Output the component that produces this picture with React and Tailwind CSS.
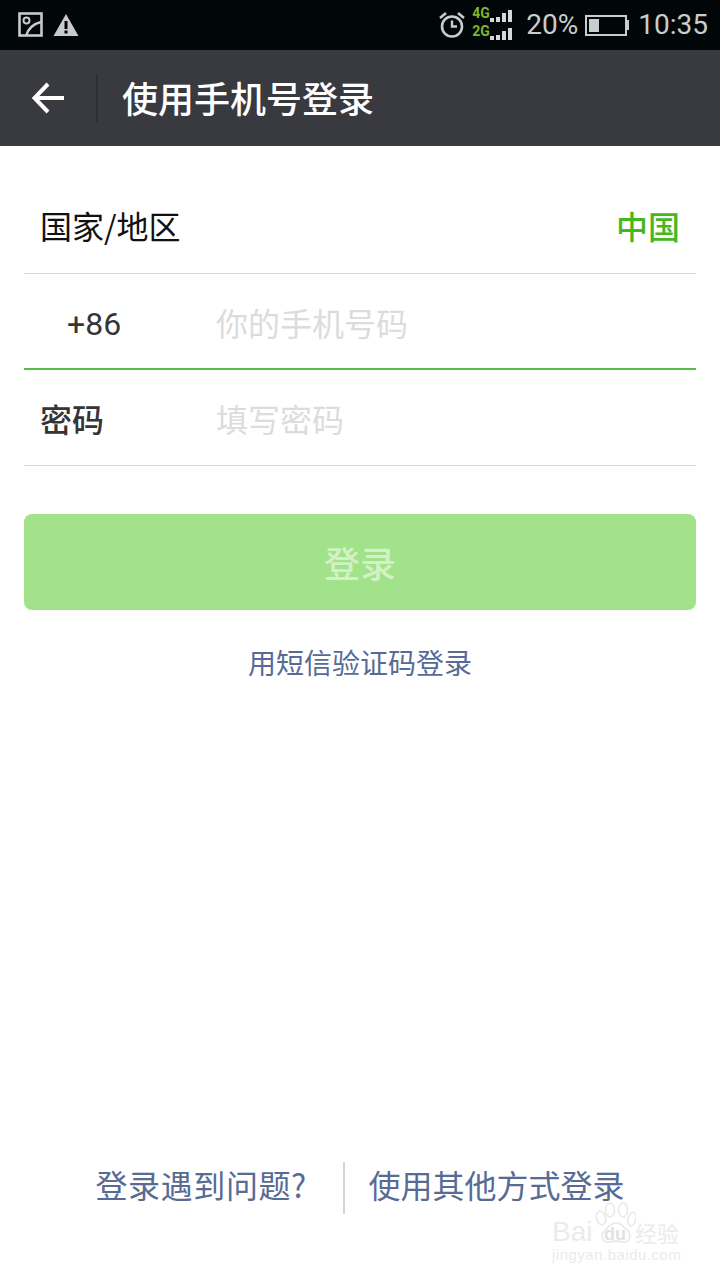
import React from 'react';

const cjk = 'font-["Noto_Sans_CJK_SC","Noto_Sans",sans-serif]';

const ImageOffIcon = () => (
  <svg width="26" height="26" viewBox="0 0 26 26" fill="none" stroke="#c9cac9">
    <rect x="1.5" y="1.5" width="22" height="22" strokeWidth="2.6" />
    <circle cx="8.5" cy="8.5" r="3" strokeWidth="2" />
    <path d="M23 10 C15 12 10 17 8 24" strokeWidth="2.6" />
  </svg>
);

const WarningIcon = () => (
  <svg width="26" height="24" viewBox="0 0 26 24">
    <path d="M13 1 L25.5 23 H0.5 Z" fill="#c9cac9" />
    <rect x="11.5" y="8" width="3" height="8" fill="#000" />
    <rect x="11.5" y="17.5" width="3" height="3" fill="#000" />
  </svg>
);

const AlarmIcon = () => (
  <svg width="26" height="28" viewBox="0 0 26 28" fill="none" stroke="#c9cdcb">
    <circle cx="13" cy="15.5" r="10" strokeWidth="2.6" />
    <path d="M13 9.5 V15.5 H18" strokeWidth="2.4" />
    <path d="M1 7 L7 2 M25 7 L19 2" strokeWidth="2.6" />
  </svg>
);

const SignalBars = () => (
  <div className="flex items-end gap-[2px] h-[12px]">
    <div className="w-[4px] h-[4px] bg-[#d5d8d6]" />
    <div className="w-[4px] h-[5px] bg-[#d5d8d6]" />
    <div className="w-[4px] h-[9px] bg-[#d5d8d6]" />
    <div className="w-[4px] h-[12px] bg-[#d5d8d6]" />
  </div>
);

const Signal = () => (
  <div className="flex flex-col gap-[6px] w-[40px]">
    {['4G', '2G'].map(label => (
      <div key={label} className="flex items-end">
        <span className='w-[18px] text-[14px] leading-[12px] font-bold text-[#7fb52f] font-["Roboto",sans-serif] -translate-y-[3px]'>{label}</span>
        <SignalBars />
      </div>
    ))}
  </div>
);

const Battery = () => (
  <div className="flex items-center">
    <div className="w-[42px] h-[21px] border-2 border-[#c9cdcb] p-[2px]">
      <div className="w-[10px] h-full bg-[#c9cdcb]" />
    </div>
    <div className="w-[2px] h-[10px] bg-[#c9cdcb]" />
  </div>
);

const App = () => {
  return (
    <div className={`relative w-[720px] h-[1280px] bg-white overflow-hidden flex flex-col ${cjk}`}>
      {/* status bar */}
      <div className="h-[50px] shrink-0 bg-[#010709] flex items-center pl-[18px] pr-[12px]">
        <ImageOffIcon />
        <div className="ml-[9px]"><WarningIcon /></div>
        <div className="ml-auto"><AlarmIcon /></div>
        <div className="ml-[7px]"><Signal /></div>
        <span className='ml-[14px] text-[28px] leading-[50px] text-[#c9cdcb] font-["Roboto",sans-serif]'>20%</span>
        <div className="ml-[7px]"><Battery /></div>
        <span className='ml-[9px] text-[28px] leading-[50px] text-[#c9cdcb] font-["Roboto",sans-serif]'>10:35</span>
      </div>

      {/* title bar */}
      <div className="h-[96px] shrink-0 bg-[#393a3f] flex items-center">
        <svg className="ml-[32px]" width="34" height="32" viewBox="0 0 34 32" fill="none" stroke="#fff" strokeWidth="4">
          <path d="M32 16 H3 M16 2 L2.5 16 L16 30" />
        </svg>
        <div className="ml-[30px] w-[2px] h-[48px] bg-[#2e2f33]" />
        <span className="ml-[24px] text-[36px] text-white font-medium -translate-y-[1px]">使用手机号登录</span>
      </div>

      {/* form */}
      <div className="mx-6 h-[128px] flex items-center justify-between border-b border-[#d9d9d9] px-4 pt-[31px] shrink-0">
        <span className="text-[32px] text-[#111]">国家/地区</span>
        <span className="text-[32px] text-[#45b81f] font-medium">中国</span>
      </div>
      <div className="mx-6 h-[94px] pt-[2px] flex items-center">
        <span className='w-[192px] shrink-0 pl-[43px] pt-[4px] text-[32px] text-[#353535] font-["Roboto",sans-serif]'>+86</span>
        <span className="text-[32px] text-[#dcdcdc]">你的手机号码</span>
      </div>
      <div className="mx-6 h-[2px] shrink-0 bg-[#5cbc48]" />
      <div className="mx-6 h-24 flex items-center border-b border-[#d9d9d9]">
        <span className="w-[192px] shrink-0 pl-4 text-[32px] text-[#353535] font-medium">密码</span>
        <span className="text-[32px] text-[#dcdcdc]">填写密码</span>
      </div>

      <div className="mt-12 mx-6 h-24 rounded-[8px] bg-[#a2e28b] flex items-center justify-center text-[36px] text-[#d2f1c5] font-medium">登录</div>

      <div className="mt-[28px] text-center text-[28px] leading-[48px] text-[#576b95]">用短信验证码登录</div>

      {/* bottom links */}
      <div className="mt-auto mb-[66px] flex items-center justify-center text-[32px] text-[#576b95]">
        <span className="w-[248px] text-right pr-[37px] whitespace-nowrap tracking-[0.6px] -translate-y-[4px]">登录遇到问题?</span>
        <div className="w-[2px] h-[52px] bg-[#d5d5d5]" />
        <span className="pl-[23px] whitespace-nowrap -translate-y-[4px]">使用其他方式登录</span>
      </div>

      {/* watermark */}
      <div className="absolute left-[552px] top-[1200px] w-[130px] h-[66px] text-[#ebebeb]">
        <svg className="absolute left-[42px] top-[2px]" width="42" height="44" viewBox="0 0 42 44" fill="none" stroke="#e8e8e8" strokeWidth="1.5">
          <ellipse cx="7" cy="16" rx="4.5" ry="7" transform="rotate(-15 7 16)" />
          <ellipse cx="16" cy="8" rx="4.5" ry="7" />
          <ellipse cx="29" cy="8" rx="4.5" ry="7" />
          <ellipse cx="38" cy="17" rx="4" ry="7" transform="rotate(15 38 17)" />
          <path d="M22 21 C16 21 15 25 11 28 C6 32 8 41 15 40 C19 39 25 39 29 40 C36 41 38 32 33 28 C29 25 28 21 22 21 Z" />
        </svg>
        <span className='absolute left-0 top-[17px] text-[28px] leading-[30px] font-["Liberation_Sans",sans-serif]'>Bai</span>
        <span className='absolute left-[52px] top-[24px] text-[18px] leading-[20px] font-bold text-[#e2e2e2] font-["Liberation_Sans",sans-serif]'>du</span>
        <span className="absolute left-[83px] top-[20px] text-[22px] leading-[24px] whitespace-nowrap">经验</span>
        <span className='absolute left-0 top-[46px] text-[15px] leading-[18px] tracking-[0.5px] font-["Liberation_Sans",sans-serif]'>jingyan.baidu.com</span>
      </div>
    </div>
  );
};

export default App;
